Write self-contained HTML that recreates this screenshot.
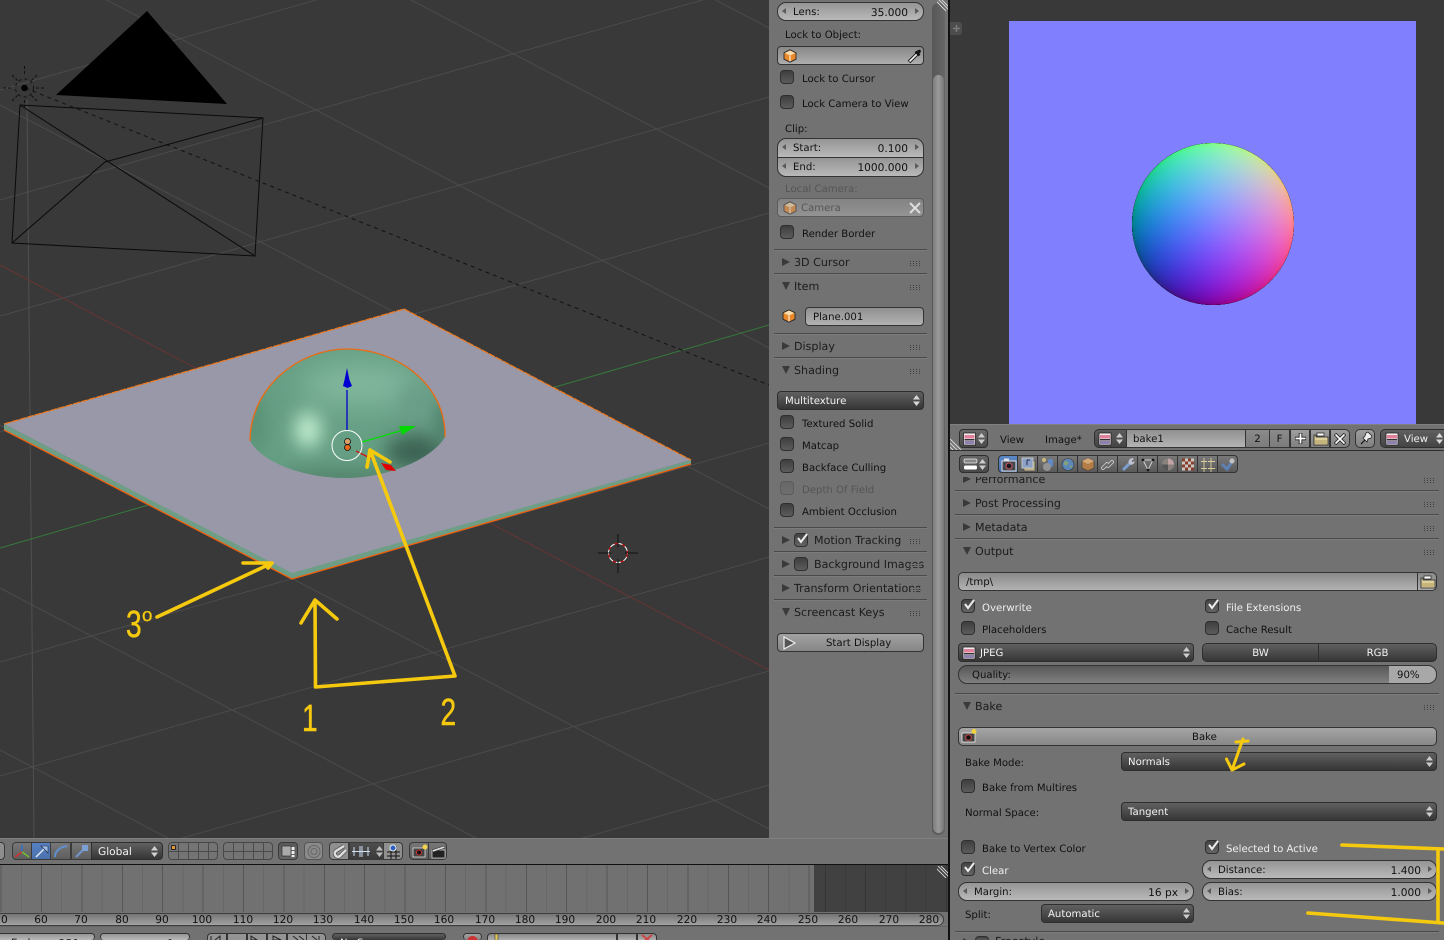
<!DOCTYPE html>
<html><head><meta charset="utf-8"><title>Bake</title>
<style>
html,body{margin:0;padding:0;background:#727272;width:1444px;height:940px;overflow:hidden}
#r{position:relative;width:1444px;height:940px;overflow:hidden;background:#727272;font:10.15px/14px "DejaVu Sans","Liberation Sans",sans-serif;color:#111;text-rendering:geometricPrecision}
#r div,#r span,#r svg{position:absolute;box-sizing:border-box}
.t{white-space:nowrap;height:14px;line-height:14px;margin-top:2px}
.wh{color:#efefef}.dis{color:#555}
.h{font-size:11.1px;color:#1c1c1c}
.t.h{margin-top:1px}
.ln{height:1px;background:#4a4a4a;box-shadow:0 1px 0 #7c7c7c}
.g{width:11px;height:5px;background:repeating-linear-gradient(90deg,#3e3e3e 0 1px,transparent 1px 3px)}
.g::after{content:"";position:absolute;left:0;top:0;width:11px;height:5px;background:repeating-linear-gradient(180deg,transparent 0 1px,#727272 1px 2px)}
.tr{width:0;height:0;border-top:4px solid transparent;border-bottom:4px solid transparent;border-left:8px solid #3a3a3a}
.td{width:0;height:0;border-left:4.5px solid transparent;border-right:4.5px solid transparent;border-top:8px solid #3a3a3a}
.cb{width:14px;height:14px;border-radius:4px;border:1px solid #2f2f2f;background:linear-gradient(#3f3f3f,#5c5c5c)}
.cb.d{border-color:#5b5b5b;background:linear-gradient(#676767,#6e6e6e)}
.cb.on{background:linear-gradient(#444,#646464)}
.cb.on svg{left:0;top:-3px;width:14px;height:14px}
.w{border:1px solid #333;white-space:nowrap;line-height:20px}
.num{border-radius:9px;background:linear-gradient(#959595,#b9b9b9);color:#111}
.num b,.fld b,.dd b{font-weight:normal;position:absolute;top:0}
.num .l{left:15px}.num .v{right:15px;font-size:10.6px}
.la,.ra{position:absolute;top:5px;width:0;height:0;border-top:3.5px solid transparent;border-bottom:3.5px solid transparent}
.la{left:4px;border-right:4px solid #5a5a5a}.ra{right:4px;border-left:4px solid #5a5a5a}
.fld{border-radius:4px;background:linear-gradient(#888,#aeaeae);color:#111}
.dd{border-radius:4px;background:linear-gradient(#606060,#363636);color:#f2f2f2;border-color:#2e2e2e}
.btn{border-radius:4px;background:linear-gradient(#a2a2a2,#868686);color:#111;text-align:center}
.ud{width:7px;height:11px}
.ic{width:14px;height:14px}
.seg{height:19px;top:429px;background:linear-gradient(#9e9e9e,#808080);border:1px solid #333;text-align:center;color:#111;line-height:20px}
.tab{top:455px;height:18px;width:20px;background:linear-gradient(#787878,#5a5a5a);border:1px solid #333;border-left:0}
.tab svg{left:2px;top:1px;width:16px;height:15px;opacity:.9}
.tb{height:18px;top:842px;border:1px solid #3a3a3a;background:linear-gradient(#777,#5e5e5e)}
.tb svg{left:1px;top:1px;width:17px;height:15px}
.lay{height:18px;top:842px;width:50px;border:1px solid #474747;border-radius:4px;background:linear-gradient(#4b4b4b,#4b4b4b) 0 8px/100% 1px no-repeat,repeating-linear-gradient(90deg,#747474 0 9px,#4b4b4b 9px 10px)}
.t.fr{top:912px;width:30px;text-align:center;height:14px;color:#111;font-size:10.6px;margin-top:1px}
.pb{top:933px;width:20px;height:7px;border:1px solid #333;border-bottom:0;background:#949494}
.bot{top:933px;height:7px;border-bottom:0;overflow:hidden}
.bot b{height:6px;overflow:hidden;display:block}
</style></head><body><div id="r">

<!-- 3D VIEWPORT -->
<svg style="left:0;top:0" width="769" height="838" viewBox="0 0 769 838">
<defs>
<clipPath id="dc"><path d="M250 441C250 388 298 349 347 349C398 349 446 385 445 437C432 459 388 478 345 478C308 478 264 465 250 441Z"/></clipPath>
<filter id="b8" x="-150%" y="-150%" width="400%" height="400%"><feGaussianBlur stdDeviation="9"/></filter>
<filter id="b14" x="-150%" y="-150%" width="400%" height="400%"><feGaussianBlur stdDeviation="14"/></filter>
</defs>
<rect width="769" height="838" fill="#393939"/>
<g stroke="#4b4b4b" stroke-width="1" fill="none">
<path d="M0 90L769 -129M0 200L769 -19M0 316L769 97M0 432L769 213M0 662L769 443M0 776L769 557M0 890L769 671M0 1004L769 785M0 1118L769 899"/>
<path d="M0 -376L769 28M0 -216L769 188M0 -56L769 348M0 105L769 509M0 425L769 829M0 588L769 992M0 750L769 1154"/>
<path d="M27 100L34 838" stroke="#505050"/>
</g>
<path d="M0 548L769 325" stroke="#357a3c"/>
<path d="M0 265L769 670" stroke="#673434"/>
<path d="M25 88L769 385" stroke="#111" stroke-dasharray="4 4"/>
<!-- camera -->
<path d="M147 11L56 95L227 104Z" fill="#000"/>
<path d="M20 105L263 118L255 256L12 243ZM20 105L255 256M263 118L105 162L12 243" fill="none" stroke="#0a0a0a" stroke-width="1"/>
<!-- lamp -->
<circle cx="24.5" cy="88" r="3.2" fill="#000"/>
<circle cx="24.5" cy="88" r="9" fill="none" stroke="#111" stroke-dasharray="3 3"/>
<path d="M24.5 66V75M24.5 100V107M3 88H13M36 88H46M12 75L18 81M37 75L31 81M12 101L18 95M37 101L31 95" stroke="#111" fill="none" stroke-dasharray="3 2"/>
<!-- plane -->
<path d="M4 424L292 572L691 460L691 464L292 579L4 430Z" fill="#6f9e86"/>
<path d="M4 424L404 309L691 460L292 573Z" fill="#9898a8"/>
<path d="M4 424L404 309L691 460" fill="none" stroke="#ee7a20" stroke-width="1.3" stroke-dasharray="7 1"/>
<path d="M4 430L292 579L691 464" fill="none" stroke="#f0600c" stroke-width="1.3"/>
<!-- dome -->
<g clip-path="url(#dc)">
<rect x="240" y="340" width="220" height="150" fill="#669f84"/>
<ellipse cx="360" cy="385" rx="60" ry="22" fill="#80b79d" filter="url(#b14)"/>
<ellipse cx="416" cy="408" rx="16" ry="26" fill="#6c9d8a" filter="url(#b8)"/>
<ellipse cx="415" cy="452" rx="30" ry="18" fill="#3c6354" filter="url(#b8)"/>
<ellipse cx="445" cy="425" rx="8" ry="26" fill="#4a7766" filter="url(#b8)"/>
<ellipse cx="256" cy="425" rx="8" ry="30" fill="#558c70" filter="url(#b8)"/>
<ellipse cx="308" cy="430" rx="13" ry="18" fill="#c4f0d2" filter="url(#b8)"/>
<ellipse cx="345" cy="478" rx="70" ry="8" fill="#4f7d65" filter="url(#b8)"/>
</g>
<path d="M250 441C250 388 298 349 347 349C398 349 446 385 445 437" fill="none" stroke="#ee6a10" stroke-width="1.3"/>
<!-- gizmo -->
<path d="M347 430V390" stroke="#0000d0" stroke-width="1.3"/>
<path d="M347 368L349.5 380L352 386L347.5 388L343 386L344.5 380Z" fill="#0000d0"/>
<path d="M362 442L400 431" stroke="#00e000" stroke-width="1.2"/>
<path d="M399 426L416 426L402 435Z" fill="#00d800"/>
<path d="M356 451L372 459" stroke="#e00000" stroke-width="1.2"/>
<path d="M381 463L391 465L396 471L386 470Z" fill="#e00000"/>
<circle cx="347" cy="445.500" r="15" fill="none" stroke="#fff" stroke-width="1"/>
<circle cx="347.500" cy="441.500" r="3" fill="#dba36a" stroke="#111" stroke-width=".8"/>
<circle cx="347.500" cy="447.500" r="3" fill="#e8681a" stroke="#111" stroke-width=".8"/>
<!-- 3d cursor -->
<circle cx="618" cy="553" r="9.500" fill="none" stroke="#e00" stroke-width="1" stroke-dasharray="5 3"/>
<circle cx="618" cy="553" r="9.500" fill="none" stroke="#fff" stroke-width="1" stroke-dasharray="5 3" stroke-dashoffset="4"/>
<path d="M618 534V547M618 559V573M598 553H611M625 553H638" stroke="#111"/>
</svg>

<!-- 3D bottom toolbar -->
<div style="left:0;top:838px;width:950px;height:26px;background:#727272;border-top:1px solid #7f7f7f"></div>
<div class="tb" style="left:-14px;width:19px;border-radius:4px;background:#8e8e8e"></div>
<div class="tb" style="left:12px;width:20px;border-radius:4px 0 0 4px"><svg viewBox="0 0 17 15"><path d="M8 7V1" stroke="#2f6fd0" stroke-width="1.5"/><path d="M8 8L1 13" stroke="#d03030" stroke-width="1.500"/><path d="M8 8L15 13" stroke="#6cc030" stroke-width="1.500"/></svg></div>
<div class="tb" style="left:31px;width:20px;background:linear-gradient(#5680c2,#4b72ae)"><svg viewBox="0 0 17 15"><path d="M3 13L13 3" stroke="#dfe8f5" stroke-width="1.500"/><path d="M8 2H15V9Z" fill="#9bbce8" stroke="#223" stroke-width=".6"/></svg></div>
<div class="tb" style="left:50px;width:21px"><svg viewBox="0 0 17 15"><path d="M3 13C3 7 8 3 15 2" stroke="#5f8fd0" stroke-width="2" fill="none"/></svg></div>
<div class="tb" style="left:71px;width:21px"><svg viewBox="0 0 17 15"><path d="M3 13L11 5" stroke="#6f96cc" stroke-width="2"/><rect x="9" y="1" width="6" height="6" fill="#7aa0d6"/></svg></div>
<div class="w dd" style="left:91px;top:842px;width:72px;height:18px;border-radius:0 4px 4px 0;padding-left:6px;font-size:10.6px;line-height:19px">Global<svg class="ud" style="right:4px;top:3px" viewBox="0 0 7 11"><path d="M3.500 0L7 4.500H0ZM3.500 11L0 6.500H7Z" fill="#d0d0d0"/></svg></div>
<div class="lay" style="left:168px"><div style="left:2px;top:2px;width:5px;height:5px;background:#e79a3a;border:1px solid #222;border-radius:1px"></div></div>
<div class="lay" style="left:223px"></div>
<div class="tb" style="left:278px;width:20px;border-radius:4px;background:linear-gradient(#5a5a5a,#666)"><svg viewBox="0 0 17 15"><rect x="2" y="2" width="9" height="10" fill="#aaa" stroke="#222" stroke-width=".6"/><path d="M13 3v10" stroke="#eee" stroke-width="3" stroke-dasharray="3 1"/></svg></div>
<div class="tb" style="left:304px;width:19px;border-radius:4px;background:#8a8a8a;border-color:#555"><svg viewBox="0 0 17 15"><circle cx="8" cy="7.500" r="6" fill="none" stroke="#666"/><circle cx="8" cy="7.500" r="3" fill="none" stroke="#666"/></svg></div>
<div class="tb" style="left:329px;width:20px;border-radius:4px 0 0 4px;background:#8f8f8f"><svg viewBox="0 0 17 15"><path d="M13 2L5 7a3 3 0 0 0 4 5L15 6" fill="none" stroke="#555" stroke-width="4"/><path d="M13 2L5 7a3 3 0 0 0 4 5L15 6" fill="none" stroke="#ddd" stroke-width="2.500"/></svg></div>
<div class="tb" style="left:349px;width:35px;background:linear-gradient(#4e4e4e,#3a3a3a)"><svg style="width:20px" viewBox="0 0 20 15"><path d="M1 7.500H19M3 3v9M9 2v11M11 2v11M17 3v9" stroke="#cfe0f5" fill="none"/></svg><svg class="ud" style="left:26px;top:3px;width:7px;height:11px" viewBox="0 0 7 11"><path d="M3.500 0L7 4.500H0ZM3.500 11L0 6.500H7Z" fill="#bbb"/></svg></div>
<div class="tb" style="left:383px;width:20px;border-radius:0 4px 4px 0;background:#8f8f8f"><svg viewBox="0 0 17 15"><path d="M2 8H15M2 12H15M6 2V15M11 2V15" stroke="#111"/><circle cx="8" cy="4" r="3" fill="#2a60c0" stroke="#eee"/></svg></div>
<div class="tb" style="left:409px;width:20px;border-radius:4px 0 0 4px"><svg viewBox="0 0 17 15"><rect x="2" y="4" width="12" height="9" fill="#444" stroke="#ddd" stroke-width=".8"/><circle cx="8" cy="8.500" r="2.500" fill="#111" stroke="#c33"/><circle cx="14" cy="3" r="2.500" fill="#f2d24a"/></svg></div>
<div class="tb" style="left:428px;width:19px;border-radius:0 4px 4px 0"><svg viewBox="0 0 17 15"><rect x="2" y="6" width="13" height="8" fill="#222" stroke="#ddd" stroke-width=".7"/><path d="M2 6L14 2L15 4L3 8Z" fill="#ddd" stroke="#222" stroke-width=".5"/></svg></div>
<div style="left:0;top:864px;width:950px;height:1px;background:#111"></div>

<!-- Timeline -->
<div style="left:0;top:865px;width:950px;height:47px;background:#717171"></div>
<div style="left:814px;top:865px;width:135px;height:47px;background:#414141"></div>
<div style="left:0;top:865px;width:814px;height:47px;background:repeating-linear-gradient(90deg,transparent 0 .6px,#565656 .6px 1.600px,transparent 1.600px 20.800px,#686868 20.800px 21.800px,transparent 21.800px 40.400px)"></div>
<div style="left:814px;top:865px;width:135px;height:47px;background:repeating-linear-gradient(90deg,transparent 0 10.800px,#353535 10.800px 11.800px,transparent 11.800px 30.800px,#3a3a3a 30.800px 31.800px,transparent 31.800px 40.400px)"></div>
<svg style="left:937px;top:866px" width="12" height="12" viewBox="0 0 12 12"><path d="M1 0L12 11M4 0L12 8M-1 2L10 13" stroke="#ddd" stroke-width=".9" fill="none"/></svg>
<div style="left:-12px;top:913px;width:956px;height:13px;border:1px solid #3f3f3f;border-radius:7px;background:linear-gradient(#757575,#a2a2a2)"></div>
<span class="t fr" style="left:-14px">50</span>
<span class="t fr" style="left:26px">60</span><span class="t fr" style="left:66px">70</span><span class="t fr" style="left:107px">80</span><span class="t fr" style="left:147px">90</span><span class="t fr" style="left:187px">100</span><span class="t fr" style="left:228px">110</span><span class="t fr" style="left:268px">120</span><span class="t fr" style="left:308px">130</span><span class="t fr" style="left:349px">140</span><span class="t fr" style="left:389px">150</span><span class="t fr" style="left:429px">160</span><span class="t fr" style="left:470px">170</span><span class="t fr" style="left:510px">180</span><span class="t fr" style="left:550px">190</span><span class="t fr" style="left:591px">200</span><span class="t fr" style="left:631px">210</span><span class="t fr" style="left:672px">220</span><span class="t fr" style="left:712px">230</span><span class="t fr" style="left:752px">240</span><span class="t fr" style="left:793px">250</span><span class="t fr" style="left:833px">260</span><span class="t fr" style="left:874px">270</span><span class="t fr" style="left:914px">280</span>
<div style="left:0;top:926px;width:950px;height:14px;background:#727272;border-top:1px solid #666"></div>
<div class="w num bot" style="left:-20px;width:115px"><b class="l" style="left:30px">End:</b><b class="v">250</b></div>
<div class="w num bot" style="left:100px;width:90px"><b class="v">1</b></div>
<div class="w dd bot" style="left:332px;width:114px"><b style="left:7px">No Sync</b></div>
<div class="w btn bot" style="left:463px;width:19px"><svg style="left:2px;top:1px;width:13px;height:5px" viewBox="0 0 13 5"><circle cx="6.500" cy="6.500" r="5.500" fill="#c33"/></svg></div>
<div class="w fld bot" style="left:487px;width:130px;border-radius:4px 0 0 0"><svg style="left:5px;top:0;width:10px;height:6px" viewBox="0 0 10 6"><path d="M2 0H5V8H2Z" fill="#e2c75a" stroke="#222" stroke-width=".5"/></svg></div>
<div class="w fld bot" style="left:617px;width:20px;border-radius:0"></div>
<div class="w fld bot" style="left:637px;width:20px;border-radius:0 4px 0 0"><svg style="left:3px;top:0;width:12px;height:6px" viewBox="0 0 12 6"><path d="M1 1L11 9M11 1L1 9" stroke="#c44" stroke-width="2"/></svg></div>
<div class="pb" style="left:207px;border-radius:4px 0 0 0"></div><div class="pb" style="left:227px"></div><div class="pb" style="left:247px"></div><div class="pb" style="left:267px"></div><div class="pb" style="left:287px"></div><div class="pb" style="left:306px;border-radius:0 4px 0 0"></div>
<svg style="left:207px;top:933px" width="120" height="7" viewBox="0 0 120 7"><path d="M4 3V7M8 7L13 3V7M50 7L44 3V7ZM66 3L74 7H66ZM86 3L91 7M92 3L97 7M105 3L110 7M112 3V7" stroke="#222" fill="none"/></svg>

<!-- N PANEL -->
<div style="left:769px;top:0;width:180px;height:838px;background:#727272"></div>
<div style="left:932px;top:3px;width:13px;height:832px;border-radius:6px;background:linear-gradient(90deg,#575757,#666)"></div>
<div style="left:933px;top:75px;width:11px;height:758px;border-radius:6px;background:linear-gradient(90deg,#7d7d7d,#9a9a9a 50%,#777)"></div>
<svg style="left:937px;top:0" width="12" height="12" viewBox="0 0 12 12"><path d="M1 -1L12 10M4 -1L12 7M-1 1L9 11" stroke="#ddd" stroke-width=".9"/></svg>
<div style="left:948px;top:0;width:2px;height:940px;background:#111"></div>

<div class="w num" style="left:777px;top:2px;width:147px;height:19px"><i class="la"></i><i class="ra"></i><b class="l">Lens:</b><b class="v">35.000</b></div>
<span class="t" style="left:785px;top:27px">Lock to Object:</span>
<div class="w fld" style="left:777px;top:46px;width:147px;height:19px"><svg class="ic" style="left:5px;top:2px" viewBox="0 0 14 14"><use href="#cube"/></svg><svg style="left:129px;top:1px;width:15px;height:16px" viewBox="0 0 15 16"><path d="M2 14L10 6" stroke="#111" stroke-width="3.600"/><path d="M2.500 13.500L10 6" stroke="#eee" stroke-width="1.800"/><path d="M8.500 3.500L12.500 7.500" stroke="#111" stroke-width="2.400"/><path d="M10 2.500L13 1.500L14 3L13 5.500L11 5Z" fill="#111"/></svg></div>
<div class="cb" style="left:780px;top:70px"></div><span class="t" style="left:802px;top:71px">Lock to Cursor</span>
<div class="cb" style="left:780px;top:95px"></div><span class="t" style="left:802px;top:96px">Lock Camera to View</span>
<span class="t" style="left:785px;top:121px">Clip:</span>
<div class="w num" style="left:777px;top:138px;width:147px;height:20px;border-radius:9px 9px 0 0"><i class="la"></i><i class="ra"></i><b class="l">Start:</b><b class="v">0.100</b></div>
<div class="w num" style="left:777px;top:157px;width:147px;height:20px;border-radius:0 0 9px 9px"><i class="la"></i><i class="ra"></i><b class="l">End:</b><b class="v">1000.000</b></div>
<span class="t dis" style="left:785px;top:181px">Local Camera:</span>
<div class="w fld" style="left:777px;top:198px;width:147px;height:19px;border-color:#5c5c5c;background:linear-gradient(#838383,#939393);color:#555"><svg class="ic" style="left:5px;top:2px;opacity:.6" viewBox="0 0 14 14"><use href="#cube"/></svg><b style="left:23px">Camera</b><svg style="left:131px;top:3px;width:12px;height:12px" viewBox="0 0 12 12"><path d="M1 1L11 11M11 1L1 11" stroke="#ddd" stroke-width="2"/></svg></div>
<div class="cb" style="left:780px;top:225px"></div><span class="t" style="left:802px;top:226px">Render Border</span>
<div class="ln" style="left:774px;top:249px;width:153px"></div>
<div class="tr" style="left:782px;top:258px"></div><span class="t h" style="left:794px;top:255px">3D Cursor</span><div class="g" style="left:910px;top:261px"></div>
<div class="ln" style="left:774px;top:273px;width:153px"></div>
<div class="td" style="left:782px;top:282px"></div><span class="t h" style="left:794px;top:279px">Item</span><div class="g" style="left:910px;top:285px"></div>
<svg class="ic" style="left:782px;top:309px" viewBox="0 0 14 14"><use href="#cube"/></svg>
<div class="w fld" style="left:805px;top:307px;width:119px;height:19px;background:linear-gradient(#909090,#b2b2b2)"><b style="left:7px">Plane.001</b></div>
<div class="ln" style="left:774px;top:333px;width:153px"></div>
<div class="tr" style="left:782px;top:342px"></div><span class="t h" style="left:794px;top:339px">Display</span><div class="g" style="left:910px;top:345px"></div>
<div class="ln" style="left:774px;top:357px;width:153px"></div>
<div class="td" style="left:782px;top:366px"></div><span class="t h" style="left:794px;top:363px">Shading</span><div class="g" style="left:910px;top:369px"></div>
<div class="w dd" style="left:777px;top:391px;width:147px;height:19px"><b style="left:7px">Multitexture</b><svg class="ud" style="right:3px;top:3px" viewBox="0 0 7 11"><path d="M3.500 0L7 4.500H0ZM3.500 11L0 6.500H7Z" fill="#d8d8d8"/></svg></div>
<div class="cb" style="left:780px;top:415px"></div><span class="t" style="left:802px;top:416px">Textured Solid</span>
<div class="cb" style="left:780px;top:437px"></div><span class="t" style="left:802px;top:438px">Matcap</span>
<div class="cb" style="left:780px;top:459px"></div><span class="t" style="left:802px;top:460px">Backface Culling</span>
<div class="cb d" style="left:780px;top:481px"></div><span class="t dis" style="left:802px;top:482px">Depth Of Field</span>
<div class="cb" style="left:780px;top:503px"></div><span class="t" style="left:802px;top:504px">Ambient Occlusion</span>
<div class="ln" style="left:774px;top:527px;width:153px"></div>
<div class="tr" style="left:782px;top:536px"></div><div class="cb on" style="left:794px;top:533px"><svg viewBox="0 0 14 14"><path d="M3 7L6 11L12 3" fill="none" stroke="#eee" stroke-width="2"/></svg></div><span class="t h" style="left:814px;top:533px">Motion Tracking</span><div class="g" style="left:910px;top:539px"></div>
<div class="ln" style="left:774px;top:551px;width:153px"></div>
<div class="tr" style="left:782px;top:560px"></div><div class="cb" style="left:794px;top:557px"></div><span class="t h" style="left:814px;top:557px">Background Images</span><div class="g" style="left:910px;top:563px"></div>
<div class="ln" style="left:774px;top:575px;width:153px"></div>
<div class="tr" style="left:782px;top:584px"></div><span class="t h" style="left:794px;top:581px">Transform Orientations</span><div class="g" style="left:910px;top:587px"></div>
<div class="ln" style="left:774px;top:599px;width:153px"></div>
<div class="td" style="left:782px;top:608px"></div><span class="t h" style="left:794px;top:605px">Screencast Keys</span><div class="g" style="left:910px;top:611px"></div>
<div class="w btn" style="left:777px;top:633px;width:147px;height:19px"><svg style="left:5px;top:2px;width:13px;height:14px" viewBox="0 0 13 14"><path d="M1 1L12 7L1 13Z" fill="#555" stroke="#eee" stroke-width="1.200"/></svg><span class="t" style="left:48px;top:1px">Start Display</span></div>

<!-- IMAGE EDITOR -->
<div style="left:950px;top:0;width:494px;height:424px;background:#393939"></div>
<div style="left:950px;top:22px;width:12px;height:13px;background:#4d4d4d;border-radius:0 3px 3px 0"></div>
<svg style="left:953px;top:25px" width="7" height="7" viewBox="0 0 7 7"><path d="M3.500 0V7M0 3.500H7" stroke="#7a7a7a" stroke-width="1.600"/></svg>
<div style="left:1009px;top:21px;width:407px;height:403px;background:#8080ff"></div>
<div style="left:1132px;top:143px;width:162px;height:162px;border-radius:50%;overflow:hidden;background:#000;isolation:isolate">
<div style="left:0;top:0;width:162px;height:162px;background:linear-gradient(90deg,#000,#f00);mix-blend-mode:plus-lighter"></div>
<div style="left:0;top:0;width:162px;height:162px;background:linear-gradient(0deg,#000,#0f0);mix-blend-mode:plus-lighter"></div>
<div style="left:0;top:0;width:162px;height:162px;background:radial-gradient(circle closest-side,#0000ff 0,#0000f9 30%,#0000ee 50%,#0000db 70%,#0000c3 85%,#0000a7 95%,#000080 100%);mix-blend-mode:plus-lighter"></div>
</div>

<!-- IMAGE HEADER -->
<div style="left:950px;top:424px;width:494px;height:26px;background:#727272;border-top:1px solid #808080"></div>
<div class="w dd" style="left:959px;top:429px;width:29px;height:19px;background:linear-gradient(#6a6a6a,#4a4a4a)"><svg class="ic" style="left:2px;top:2px;width:15px;height:14px" viewBox="0 0 14 14"><use href="#img"/></svg><svg class="ud" style="right:2px;top:3px" viewBox="0 0 7 11"><path d="M3.500 0L7 4.500H0ZM3.500 11L0 6.500H7Z" fill="#ccc"/></svg></div>
<span class="t" style="left:1000px;top:432px">View</span><span class="t" style="left:1045px;top:432px">Image*</span>
<div class="w dd" style="left:1094px;top:429px;width:33px;height:19px;border-radius:5px 0 0 5px;background:linear-gradient(#5c5c5c,#444)"><svg class="ic" style="left:3px;top:2px" viewBox="0 0 14 14"><use href="#img"/></svg><svg class="ud" style="right:3px;top:3px" viewBox="0 0 7 11"><path d="M3.500 0L7 4.500H0ZM3.500 11L0 6.500H7Z" fill="#ccc"/></svg></div>
<div class="w fld" style="left:1126px;top:429px;width:120px;height:19px;border-radius:0;background:linear-gradient(#919191,#b4b4b4)"><b style="left:6px">bake1</b></div>
<div class="seg" style="left:1245px;width:25px;background:linear-gradient(#8a8a8a,#7c7c7c)">2</div>
<div class="seg" style="left:1269px;width:21px;background:linear-gradient(#8a8a8a,#7c7c7c)">F</div>
<div class="seg" style="left:1290px;width:20px"><svg style="left:3px;top:2px;width:13px;height:13px" viewBox="0 0 13 13"><path d="M6.500 1V12M1 6.500H12" stroke="#222" stroke-width="3.600"/><path d="M6.500 1.500V11.500M1.500 6.500H11.500" stroke="#fff" stroke-width="1.800"/></svg></div>
<div class="seg" style="left:1310px;width:20px"><svg style="left:2px;top:1px;width:16px;height:15px" viewBox="0 0 16 15"><use href="#fold"/></svg></div>
<div class="seg" style="left:1330px;width:20px;border-radius:0 5px 5px 0"><svg style="left:3px;top:3px;width:12px;height:12px" viewBox="0 0 12 12"><path d="M1 1L11 11M11 1L1 11" stroke="#222" stroke-width="3.400"/><path d="M1.500 1.500L10.500 10.500M10.500 1.500L1.500 10.500" stroke="#fff" stroke-width="1.600"/></svg></div>
<div class="seg" style="left:1355px;width:20px;border-radius:5px"><svg style="left:2px;top:1px;width:16px;height:15px" viewBox="0 0 16 15"><path d="M3 13L7 9" stroke="#111" stroke-width="1.200"/><path d="M5 7L9 11L10 8L13 7L14 5L10 1L8 2L7 5Z" fill="#eee" stroke="#222" stroke-width=".8"/></svg></div>
<div class="w dd" style="left:1380px;top:429px;width:64px;height:19px;border-radius:5px 0 0 5px;border-right:0;background:linear-gradient(#606060,#444)"><svg class="ic" style="left:4px;top:2px" viewBox="0 0 14 14"><use href="#img"/></svg><b style="left:23px">View</b><svg class="ud" style="left:55px;top:3px" viewBox="0 0 7 11"><path d="M3.500 0L7 4.500H0ZM3.500 11L0 6.500H7Z" fill="#d8d8d8"/></svg></div>
<svg style="left:950px;top:438px" width="13" height="13" viewBox="0 0 13 13"><path d="M0 1L12 13M0 5L8 13M0 9L4 13" stroke="#ddd" stroke-width=".9"/></svg>
<div style="left:950px;top:450px;width:494px;height:1px;background:#2d2d2d"></div>

<!-- PROPERTIES -->
<div style="left:950px;top:477px;width:494px;height:463px;background:#727272"></div>
<div class="tr" style="left:963px;top:475px"></div><span class="t h" style="left:975px;top:472px">Performance</span><div class="g" style="left:1424px;top:478px"></div>
<div style="left:950px;top:451px;width:494px;height:26px;background:#727272"></div>
<div class="w dd" style="left:959px;top:455px;width:30px;height:18px;background:linear-gradient(#666,#484848)"><svg style="left:3px;top:2px;width:15px;height:13px" viewBox="0 0 15 13"><rect x="1" y="1" width="13" height="4" rx="1.500" fill="#888" stroke="#eee" stroke-width=".7"/><rect x="1" y="7.500" width="13" height="4" rx="1.500" fill="#fff"/></svg><svg class="ud" style="right:2px;top:3px" viewBox="0 0 7 11"><path d="M3.500 0L7 4.500H0ZM3.500 11L0 6.500H7Z" fill="#ccc"/></svg></div>
<div class="tab" style="left:998px;border-left:1px solid #333;border-radius:4px 0 0 4px;background:linear-gradient(#5b86c6,#4a72ae)"><svg viewBox="0 0 16 15"><rect x="1" y="4" width="14" height="10" fill="#444" stroke="#eee"/><rect x="3" y="1.500" width="5" height="3" fill="#eee"/><circle cx="8" cy="9" r="3" fill="#111" stroke="#d55"/></svg></div>
<div class="tab" style="left:1018px"><svg viewBox="0 0 16 15"><rect x="4" y="4" width="11" height="10" fill="#c4b88a" stroke="#444" stroke-width=".6"/><rect x="2" y="1" width="11" height="10" fill="#8fa8d0" stroke="#ddd" stroke-width=".8"/><path d="M7 3V8M7 3h3" stroke="#224" fill="none"/></svg></div>
<div class="tab" style="left:1038px"><svg viewBox="0 0 16 15"><circle cx="4" cy="3" r="2" fill="#d6c27a"/><rect x="8" y="2" width="5" height="8" rx="2" fill="#5f8dd0"/><circle cx="7" cy="10" r="4" fill="#999"/></svg></div>
<div class="tab" style="left:1058px"><svg viewBox="0 0 16 15"><circle cx="8" cy="7.500" r="6" fill="#5b8bc0" stroke="#333" stroke-width=".6"/><path d="M4 5c2-2 5 0 4 2s-3 2-4 0M9 9c2-1 4 0 3 2" fill="#8aa87c"/></svg></div>
<div class="tab" style="left:1078px"><svg viewBox="0 0 16 15"><path d="M8 1L14 4V11L8 14L2 11V4Z" fill="#bb8044" stroke="#333" stroke-width=".6"/><path d="M2 4L8 7L14 4L8 1Z" fill="#e0b078"/></svg></div>
<div class="tab" style="left:1098px"><svg viewBox="0 0 16 15"><path d="M3 11L7 7M8 9L12 5" stroke="#ccc" stroke-width="4" stroke-linecap="round"/><path d="M3 11L7 7M8 9L12 5" stroke="#666" stroke-width="2" stroke-linecap="round"/></svg></div>
<div class="tab" style="left:1118px"><svg viewBox="0 0 16 15"><path d="M3 13L10 6" stroke="#7fa6dc" stroke-width="3"/><path d="M10 7a3 3 0 0 1 3-5l-2 2 1 2 2-1a3 3 0 0 1-4 2" fill="#ccd" stroke="#ccd"/></svg></div>
<div class="tab" style="left:1138px"><svg viewBox="0 0 16 15"><path d="M3 3L13 3L8 13Z" fill="none" stroke="#ddd"/><circle cx="3" cy="3" r="1.400" fill="#111"/><circle cx="13" cy="3" r="1.400" fill="#111"/><circle cx="8" cy="13" r="1.400" fill="#111"/></svg></div>
<div class="tab" style="left:1158px"><svg viewBox="0 0 16 15"><circle cx="8" cy="7.500" r="6" fill="#8f8580"/><path d="M8 1.500A6 6 0 0 1 14 7.500H8Z" fill="#caa"/><path d="M2 7.500A6 6 0 0 0 8 13.500V7.500Z" fill="#555"/></svg></div>
<div class="tab" style="left:1178px"><svg viewBox="0 0 16 15"><rect x="2" y="1.500" width="12" height="12" fill="#d8d0c8"/><path d="M2 1.500h3v3H2zM8 1.500h3v3H8zM5 4.500h3v3H5zM11 4.500h3v3h-3zM2 7.500h3v3H2zM8 7.500h3v3H8zM5 10.500h3v3H5zM11 10.500h3v3h-3z" fill="#8a3a2a"/></svg></div>
<div class="tab" style="left:1198px"><svg viewBox="0 0 16 15"><path d="M4 1V8M1 4.500H7M11 1V8M8 4.500H15M4 8V15M1 11.500H7M11 8V15M8 11.500H15" stroke="#e8d8a0" stroke-width=".9"/></svg></div>
<div class="tab" style="left:1218px;border-radius:0 4px 4px 0"><svg viewBox="0 0 16 15"><path d="M2 7L7 12L12 5" fill="none" stroke="#5f86bf" stroke-width="3"/><circle cx="12" cy="4" r="2.500" fill="#ccc"/></svg></div>

<div class="ln" style="left:955px;top:490px;width:484px"></div>
<div class="tr" style="left:963px;top:499px"></div><span class="t h" style="left:975px;top:496px">Post Processing</span><div class="g" style="left:1424px;top:502px"></div>
<div class="ln" style="left:955px;top:514px;width:484px"></div>
<div class="tr" style="left:963px;top:523px"></div><span class="t h" style="left:975px;top:520px">Metadata</span><div class="g" style="left:1424px;top:526px"></div>
<div class="ln" style="left:955px;top:538px;width:484px"></div>
<div class="td" style="left:963px;top:547px"></div><span class="t h" style="left:975px;top:544px">Output</span><div class="g" style="left:1424px;top:550px"></div>
<div class="w fld" style="left:958px;top:572px;width:460px;height:19px;border-radius:5px 0 0 5px;background:linear-gradient(#8a8a8a,#b2b2b2)"><b style="left:7px">/tmp\</b></div>
<div class="w fld" style="left:1417px;top:572px;width:20px;height:19px;border-radius:0 5px 5px 0"><svg style="left:2px;top:1px;width:16px;height:15px" viewBox="0 0 16 15"><use href="#fold"/></svg></div>
<div class="cb on" style="left:961px;top:599px"><svg viewBox="0 0 14 14"><path d="M3 7L6 11L12 3" fill="none" stroke="#eee" stroke-width="2"/></svg></div><span class="t wh" style="left:982px;top:600px">Overwrite</span>
<div class="cb on" style="left:1205px;top:599px"><svg viewBox="0 0 14 14"><path d="M3 7L6 11L12 3" fill="none" stroke="#eee" stroke-width="2"/></svg></div><span class="t wh" style="left:1226px;top:600px">File Extensions</span>
<div class="cb" style="left:961px;top:621px"></div><span class="t" style="left:982px;top:622px">Placeholders</span>
<div class="cb" style="left:1205px;top:621px"></div><span class="t" style="left:1226px;top:622px">Cache Result</span>
<div class="w dd" style="left:958px;top:643px;width:236px;height:19px"><svg class="ic" style="left:3px;top:2px" viewBox="0 0 14 14"><use href="#img"/></svg><b style="left:21px">JPEG</b><svg class="ud" style="right:3px;top:3px" viewBox="0 0 7 11"><path d="M3.500 0L7 4.500H0ZM3.500 11L0 6.500H7Z" fill="#ccc"/></svg></div>
<div class="w dd" style="left:1202px;top:643px;width:117px;height:19px;border-radius:5px 0 0 5px;text-align:center">BW</div>
<div class="w dd" style="left:1318px;top:643px;width:119px;height:19px;border-radius:0 5px 5px 0;text-align:center">RGB</div>
<div class="w" style="left:958px;top:665px;width:479px;height:19px;border-radius:9px;background:linear-gradient(90deg,transparent 430px,#a8a8a8 430px),linear-gradient(#585858,#808080);overflow:hidden"><span class="t" style="left:13px;top:1px">Quality:</span><span class="t" style="left:438px;top:1px">90%</span></div>
<div class="ln" style="left:955px;top:693px;width:484px"></div>
<div class="td" style="left:963px;top:702px"></div><span class="t h" style="left:975px;top:699px">Bake</span><div class="g" style="left:1424px;top:705px"></div>
<div class="w btn" style="left:958px;top:727px;width:479px;height:19px;border-radius:5px;background:linear-gradient(#a4a4a4,#888)"><svg style="left:2px;top:0;width:16px;height:16px" viewBox="0 0 16 16"><rect x="1" y="5" width="13" height="9" fill="#444" stroke="#eee" stroke-width=".8"/><circle cx="7.500" cy="9.500" r="2.800" fill="#111" stroke="#c44"/><circle cx="13" cy="3.500" r="2.500" fill="#f0d040"/></svg><span class="t" style="left:233px;top:1px">Bake</span></div>
<span class="t" style="left:965px;top:755px">Bake Mode:</span>
<div class="w dd" style="left:1121px;top:752px;width:316px;height:19px"><b style="left:6px">Normals</b><svg class="ud" style="right:3px;top:3px" viewBox="0 0 7 11"><path d="M3.500 0L7 4.500H0ZM3.500 11L0 6.500H7Z" fill="#ccc"/></svg></div>
<div class="cb" style="left:961px;top:779px"></div><span class="t" style="left:982px;top:780px">Bake from Multires</span>
<span class="t" style="left:965px;top:805px">Normal Space:</span>
<div class="w dd" style="left:1121px;top:802px;width:316px;height:19px"><b style="left:6px">Tangent</b><svg class="ud" style="right:3px;top:3px" viewBox="0 0 7 11"><path d="M3.500 0L7 4.500H0ZM3.500 11L0 6.500H7Z" fill="#ccc"/></svg></div>
<div class="cb" style="left:961px;top:840px"></div><span class="t" style="left:982px;top:841px">Bake to Vertex Color</span>
<div class="cb on" style="left:1205px;top:840px"><svg viewBox="0 0 14 14"><path d="M3 7L6 11L12 3" fill="none" stroke="#eee" stroke-width="2"/></svg></div><span class="t wh" style="left:1226px;top:841px">Selected to Active</span>
<div class="cb on" style="left:961px;top:862px"><svg viewBox="0 0 14 14"><path d="M3 7L6 11L12 3" fill="none" stroke="#eee" stroke-width="2"/></svg></div><span class="t wh" style="left:982px;top:863px">Clear</span>
<div class="w num" style="left:1202px;top:860px;width:235px;height:19px"><i class="la"></i><i class="ra"></i><b class="l">Distance:</b><b class="v">1.400</b></div>
<div class="w num" style="left:958px;top:882px;width:236px;height:19px"><i class="la"></i><i class="ra"></i><b class="l">Margin:</b><b class="v">16 px</b></div>
<div class="w num" style="left:1202px;top:882px;width:235px;height:19px"><i class="la"></i><i class="ra"></i><b class="l">Bias:</b><b class="v">1.000</b></div>
<span class="t" style="left:965px;top:907px">Split:</span>
<div class="w dd" style="left:1041px;top:904px;width:153px;height:19px"><b style="left:6px">Automatic</b><svg class="ud" style="right:3px;top:3px" viewBox="0 0 7 11"><path d="M3.500 0L7 4.500H0ZM3.500 11L0 6.500H7Z" fill="#ccc"/></svg></div>
<div class="ln" style="left:955px;top:931px;width:484px"></div>
<svg style="left:963px;top:938px" width="8" height="2" viewBox="0 0 8 2"><path d="M0 0L4 2H0Z" fill="#3a3a3a"/></svg>
<div class="cb" style="left:975px;top:936px;height:4px;border-bottom:0;border-radius:4px 4px 0 0"></div>
<span class="t h" style="left:995px;top:935px;height:4px;overflow:hidden;line-height:11px">Freestyle</span>

<!-- ANNOTATIONS -->
<svg style="left:0;top:0" width="1444" height="940" viewBox="0 0 1444 940">
<defs>
<symbol id="cube" viewBox="0 0 14 14"><path d="M7 .8L13 3.800V10.200L7 13.200L1 10.200V3.800Z" fill="#e8882a" stroke="#2a2a2a" stroke-width=".9"/><path d="M1.800 4L7 6.600L12.200 4L7 1.500Z" fill="#f8dcae"/><path d="M7 6.800V12.500" stroke="#fff" stroke-width="1"/></symbol>
<symbol id="img" viewBox="0 0 14 14"><rect x="1" y="1" width="12" height="12" fill="#f1eef0" stroke="#222" stroke-width=".8"/><rect x="2" y="3" width="10" height="3.500" fill="#e0809a"/><rect x="2" y="7" width="10" height="1.500" fill="#333"/><rect x="2" y="9" width="10" height="3" fill="#8f80b0"/></symbol>
<symbol id="fold" viewBox="0 0 16 15"><path d="M4 2H11V5H4Z" fill="#fff" stroke="#222" stroke-width=".7"/><path d="M1 4H3V6H15V14H1Z" fill="#ddd09c" stroke="#222" stroke-width=".8"/><path d="M2 9H14V13H2Z" fill="#c5b57c"/></symbol>
</defs>
<g fill="none" stroke="#f5c90e" stroke-width="3.600" stroke-linecap="round" stroke-linejoin="round">
<path d="M301 623L315 600L337 619M315 600L315.500 687L455 676L370 450"/>
<path d="M367 467L370 450L390 462"/>
<path d="M157 617L272 563M243 563L272 563L268 568"/>
<path d="M1342 845L1444 849M1438 849V922M1308 913L1443 923"/>
</g>
<path d="M1243 739L1232 770M1232 770L1244 764M1232 770L1226.500 759M1236 742L1248 741" fill="none" stroke="#f5c90e" stroke-width="3" stroke-linecap="round"/>
<g fill="#f5c90e" stroke="#f5c90e" stroke-width=".5" font-family="'Liberation Sans',sans-serif" font-size="38">
<text transform="translate(126 637) scale(.74 1)">3</text>
<text transform="translate(142 621) scale(.62 .62)" font-size="30">o</text>
<text transform="translate(302 731) scale(.74 1)">1</text>
<text transform="translate(440.500 725) scale(.74 1)">2</text>
</g>
</svg>
</div></body></html>
